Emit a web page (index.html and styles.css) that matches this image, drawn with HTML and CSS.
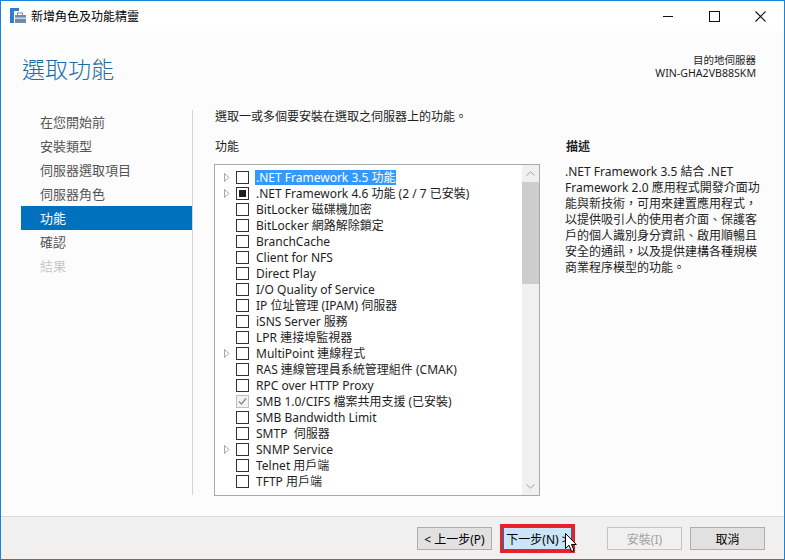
FILE: index.html
```html
<!DOCTYPE html>
<html lang="zh-Hant">
<head>
<meta charset="utf-8">
<title>新增角色及功能精靈</title>
<link rel="stylesheet" href="styles.css">
</head>
<body>
<div class="window">
  <div class="titlebar">
    <svg class="appicon" width="16" height="16" viewBox="0 0 16 16">
      <rect x="0" y="0" width="9" height="3" fill="#2b7dd0"/>
      <rect x="0" y="0" width="4" height="15" fill="#2b7dd0"/>
      <rect x="7.5" y="5" width="5" height="2.5" fill="none" stroke="#6d8aa5" stroke-width="1"/>
      <rect x="5" y="7" width="11" height="8" fill="#6f8ca8"/>
      <rect x="5" y="9.5" width="11" height="1.5" fill="#c9d6e2"/>
    </svg>
    <div class="wintitle">新增角色及功能精靈</div>
    <div class="controls">
      <div class="ctl"><svg width="10" height="10" viewBox="0 0 10 10"><line x1="0" y1="5.5" x2="10" y2="5.5" stroke="#111" stroke-width="1"/></svg></div>
      <div class="ctl"><svg width="11" height="11" viewBox="0 0 11 11"><rect x="0.5" y="0.5" width="10" height="10" fill="none" stroke="#111" stroke-width="1"/></svg></div>
      <div class="ctl"><svg width="11" height="11" viewBox="0 0 11 11"><path d="M0.5 0.5 L10.5 10.5 M10.5 0.5 L0.5 10.5" stroke="#111" stroke-width="1.1"/></svg></div>
    </div>
  </div>
  <div class="content">
    <div class="header">
      <div class="pagetitle">選取功能</div>
      <div class="dest">
        <div class="destlabel">目的地伺服器</div>
        <div class="destname">WIN-GHA2VB88SKM</div>
      </div>
    </div>
    <div class="body">
      <div class="nav">
        <div class="navitem">在您開始前</div>
        <div class="navitem">安裝類型</div>
        <div class="navitem">伺服器選取項目</div>
        <div class="navitem">伺服器角色</div>
        <div class="navitem active">功能</div>
        <div class="navitem">確認</div>
        <div class="navitem disabled">結果</div>
      </div>
      <div class="main">
        <div class="instr">選取一或多個要安裝在選取之伺服器上的功能。</div>
        <div class="label">功能</div>
        <div class="listbox">
          <div class="rows">
            <div class="row"><span class="exp"><svg width="6" height="9" viewBox="0 0 6 9"><path d="M0.5 0.5 L5 4.5 L0.5 8.5 Z" fill="none" stroke="#a6a6a6"/></svg></span><span class="cb"></span><span class="txt sel">.NET Framework 3.5 功能</span></div>
            <div class="row"><span class="exp"><svg width="6" height="9" viewBox="0 0 6 9"><path d="M0.5 0.5 L5 4.5 L0.5 8.5 Z" fill="none" stroke="#a6a6a6"/></svg></span><span class="cb ind"></span><span class="txt">.NET Framework 4.6 功能 (2 / 7 已安裝)</span></div>
            <div class="row"><span class="exp"></span><span class="cb"></span><span class="txt">BitLocker 磁碟機加密</span></div>
            <div class="row"><span class="exp"></span><span class="cb"></span><span class="txt">BitLocker 網路解除鎖定</span></div>
            <div class="row"><span class="exp"></span><span class="cb"></span><span class="txt">BranchCache</span></div>
            <div class="row"><span class="exp"></span><span class="cb"></span><span class="txt">Client for NFS</span></div>
            <div class="row"><span class="exp"></span><span class="cb"></span><span class="txt">Direct Play</span></div>
            <div class="row"><span class="exp"></span><span class="cb"></span><span class="txt">I/O Quality of Service</span></div>
            <div class="row"><span class="exp"></span><span class="cb"></span><span class="txt">IP 位址管理 (IPAM) 伺服器</span></div>
            <div class="row"><span class="exp"></span><span class="cb"></span><span class="txt">iSNS Server 服務</span></div>
            <div class="row"><span class="exp"></span><span class="cb"></span><span class="txt">LPR 連接埠監視器</span></div>
            <div class="row"><span class="exp"><svg width="6" height="9" viewBox="0 0 6 9"><path d="M0.5 0.5 L5 4.5 L0.5 8.5 Z" fill="none" stroke="#a6a6a6"/></svg></span><span class="cb"></span><span class="txt">MultiPoint 連線程式</span></div>
            <div class="row"><span class="exp"></span><span class="cb"></span><span class="txt">RAS 連線管理員系統管理組件 (CMAK)</span></div>
            <div class="row"><span class="exp"></span><span class="cb"></span><span class="txt">RPC over HTTP Proxy</span></div>
            <div class="row"><span class="exp"></span><span class="cb chk"><svg width="11" height="11" viewBox="0 0 11 11"><path d="M2 5.5 L4.5 8 L9 2.5" fill="none" stroke="#8c8c8c" stroke-width="1.4"/></svg></span><span class="txt">SMB 1.0/CIFS 檔案共用支援 (已安裝)</span></div>
            <div class="row"><span class="exp"></span><span class="cb"></span><span class="txt">SMB Bandwidth Limit</span></div>
            <div class="row"><span class="exp"></span><span class="cb"></span><span class="txt">SMTP&nbsp; 伺服器</span></div>
            <div class="row"><span class="exp"><svg width="6" height="9" viewBox="0 0 6 9"><path d="M0.5 0.5 L5 4.5 L0.5 8.5 Z" fill="none" stroke="#a6a6a6"/></svg></span><span class="cb"></span><span class="txt">SNMP Service</span></div>
            <div class="row"><span class="exp"></span><span class="cb"></span><span class="txt">Telnet 用戶端</span></div>
            <div class="row"><span class="exp"></span><span class="cb"></span><span class="txt">TFTP 用戶端</span></div>
          </div>
          <div class="scrollbar">
            <div class="arrow"><svg width="9" height="5" viewBox="0 0 9 5"><path d="M0.5 4.5 L4.5 0.8 L8.5 4.5" fill="none" stroke="#a0a0a0"/></svg></div>
            <div class="thumb"></div>
            <div class="track"></div>
            <div class="arrow"><svg width="9" height="5" viewBox="0 0 9 5"><path d="M0.5 0.5 L4.5 4.2 L8.5 0.5" fill="none" stroke="#a0a0a0"/></svg></div>
          </div>
        </div>
      </div>
      <div class="desc">
        <div class="label bold">描述</div>
        <div class="desctext">.NET Framework 3.5 結合 .NET<br>Framework 2.0 應用程式開發介面功<br>能與新技術，可用來建置應用程式，<br>以提供吸引人的使用者介面、保護客<br>戶的個人識別身分資訊、啟用順暢且<br>安全的通訊，以及提供建構各種規模<br>商業程序模型的功能。</div>
      </div>
    </div>
  </div>
  <div class="footer">
    <div class="btn">&lt; 上一步(P)</div>
    <div class="btn next">下一步(N) &gt;
      <svg class="cursor" width="13" height="20" viewBox="0 0 13 20"><path d="M0.5 0.5 L0.5 15.5 L4 12.2 L6.6 18.5 L9 17.5 L6.5 11.5 L11.3 11.5 Z" fill="#fff" stroke="#000" stroke-width="1"/></svg>
    </div>
    <div class="btn disabled">安裝(I)</div>
    <div class="btn">取消</div>
  </div>
</div>
</body>
</html>
```
FILE: styles.css
```css
* { box-sizing: border-box; }
html, body { margin: 0; padding: 0; }
body {
  font-family: "Noto Sans", "Noto Sans CJK TC", sans-serif;
  font-size: 12px;
  color: #1e1e1e;
  background: #fff;
}
.window {
  width: 785px;
  height: 560px;
  border: 1px solid #1883d7;
  display: flex;
  flex-direction: column;
  overflow: hidden;
}
.titlebar {
  height: 30px;
  background: #fff;
  display: flex;
  align-items: center;
  flex: none;
}
.appicon { margin-left: 9px; margin-top: 0px; }
.wintitle {
  margin-left: 5px;
  font-size: 12px;
  color: #000;
  flex: 1;
}
.controls { display: flex; height: 30px; margin-right: 1px; }
.ctl {
  width: 46px;
  height: 30px;
  display: flex;
  align-items: center;
  justify-content: center;
}
.content {
  flex: 1;
  background: #fcfcfc;
  display: flex;
  flex-direction: column;
  border-bottom: 1px solid #dadada;
}
.header {
  height: 74px;
  display: flex;
  justify-content: space-between;
  padding: 0 28px 0 21px;
  flex: none;
}
.pagetitle {
  margin-top: 22px;
  font-family: "Noto Sans CJK TC", sans-serif;
  font-size: 23px;
  line-height: 30px;
  font-weight: 300;
  color: #1a6ea6;
}
.dest {
  margin-top: 23px;
  text-align: right;
  line-height: 13px;
  color: #1e1e1e;
}
.destlabel { font-size: 10.5px; }
.destname { font-size: 10.6px; }
.body {
  flex: 1;
  display: flex;
}
.nav {
  margin-left: 20px;
  margin-top: 5px;
  width: 172px;
  height: 385px;
  border-right: 1px solid #d4d4d4;
  flex: none;
}
.navitem {
  height: 24px;
  line-height: 24px;
  padding-left: 19px;
  font-size: 13px;
  color: #555;
  font-family: "Noto Sans CJK TC", sans-serif;
}
.navitem.active { background: #0071bc; color: #fff; }
.navitem.disabled { color: #c8c8c8; }
.main {
  margin-left: 21px;
  padding-top: 4px;
  width: 326px;
  flex: none;
}
.instr { line-height: 16px; padding-left: 1px; }
.label { line-height: 16px; margin-top: 14px; padding-left: 1px; }
.label.bold { font-weight: bold; }
.listbox {
  margin-top: 9px;
  height: 332px;
  border: 1px solid #a9a9a9;
  background: #fff;
  display: flex;
}
.rows {
  flex: 1;
  padding-top: 4px;
  padding-left: 9px;
}
.row {
  height: 16px;
  display: flex;
  align-items: center;
  white-space: nowrap;
}
.exp {
  width: 12px;
  height: 16px;
  display: flex;
  align-items: center;
}
.cb {
  width: 13px;
  height: 13px;
  border: 1px solid #333;
  background: #fff;
  flex: none;
  display: flex;
  align-items: center;
  justify-content: center;
}
.cb.ind::after {
  content: "";
  width: 7px;
  height: 7px;
  background: #1e1e1e;
}
.cb.chk { border-color: #c0c0c0; background: #f2f2f2; }
.txt {
  margin-left: 6px;
  padding: 0 1px;
  line-height: 15px;
}
.txt.sel { background: #3399ff; color: #fff; }
.scrollbar {
  width: 17px;
  background: #f0f0f0;
  display: flex;
  flex-direction: column;
  flex: none;
}
.arrow {
  height: 17px;
  display: flex;
  align-items: center;
  justify-content: center;
}
.thumb { height: 102px; background: #cdcdcd; }
.track { flex: 1; }
.desc {
  margin-left: 25px;
  padding-top: 4px;
  flex: 1;
}
.desc .label { margin-top: 30px; }
.desctext {
  margin-top: 9px;
  line-height: 16px;
  white-space: nowrap;
}
.footer {
  height: 42px;
  background: #f0f0f0;
  flex: none;
  display: flex;
  justify-content: flex-end;
  padding: 10px 19px 0 0;
}
.btn {
  width: 75px;
  height: 23px;
  border: 1px solid #adadad;
  background: #e1e1e1;
  display: flex;
  align-items: center;
  justify-content: center;
  margin-left: 8px;
  color: #000;
  position: relative;
}
.btn.next {
  width: 69px;
  margin-left: 11px;
  margin-right: 3px;
  border-color: #0078d7;
  background: #cce4f7;
  outline: 3px solid #e8202a;
}
.btn.disabled {
  margin-left: 32px;
  border-color: #c3c3c3;
  background: #f0f0f0;
  color: #a3a3a3;
}
.cursor {
  position: absolute;
  left: 61px;
  top: 5px;
}
```
